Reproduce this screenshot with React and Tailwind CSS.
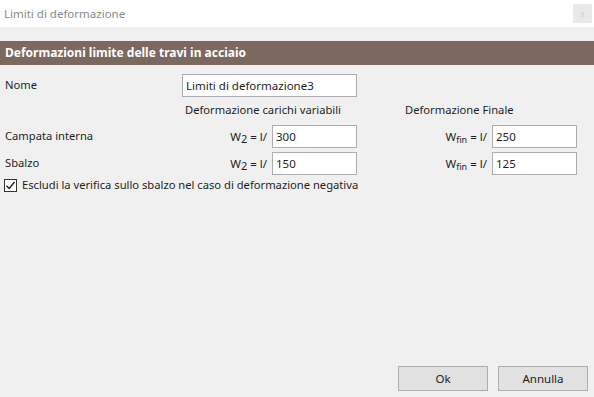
import React, { useState } from "react";

const font = { fontFamily: '"Segoe UI", "Noto Sans", "Liberation Sans", sans-serif' };

const Field = ({ value, width = "w-[85px]" }) => (
  <input
    type="text"
    defaultValue={value}
    className={`${width} h-[23px] border border-[#abadb3] bg-white px-[3px] text-[11.5px] text-[#1e1e1e] outline-none`}
  />
);

const Formula = ({ sub, smallSub }) => (
  <span className="text-[11.5px] text-[#1e1e1e] whitespace-nowrap">
    W
    <span className={smallSub ? "text-[9px] relative top-[2px]" : "text-[11px] relative top-[2px]"}>{sub}</span> = l/
  </span>
);

const App = () => {
  const [escludi, setEscludi] = useState(true);

  const rows = [
    { label: "Campata interna", a: "300", b: "250" },
    { label: "Sbalzo", a: "150", b: "125" },
  ];

  return (
    <div style={font} className="w-[594px] h-[397px] bg-[#f0f0f0] flex flex-col text-[11.2px] text-[#1e1e1e] overflow-hidden">
      <div className="h-[27px] bg-white flex items-center justify-between pl-[4px] pr-[2px]">
        <span className="text-[11.5px] text-[#8a8a8a]">Limiti di deformazione</span>
        <div className="w-[19px] h-[19px] bg-[#e9e9e9] flex items-center justify-center text-[8px] text-[#d0d0d0]">x</div>
      </div>

      <div className="mt-[14px] h-[24px] bg-[#7b685f] flex items-center px-[5px]">
        <span className="text-white font-bold text-[12px]">Deformazioni limite delle travi in acciaio</span>
      </div>

      <div className="flex flex-col pt-[9px]">
        <div className="flex items-center h-[23px]">
          <div className="w-[182px] pl-[5px]">Nome</div>
          <Field value="Limiti di deformazione3" width="w-[175px]" />
        </div>

        <div className="flex items-center h-[26px]">
          <div className="w-[185px]" />
          <div className="w-[220px]">Deformazione carichi variabili</div>
          <div>Deformazione Finale</div>
        </div>

        <div className="flex flex-col gap-[4px] mt-[2px]">
          {rows.map((r) => (
            <div key={r.label} className="flex items-center h-[23px]">
              <div className="w-[182px] pl-[5px]">{r.label}</div>
              <div className="w-[175px] flex items-center justify-end gap-[5px]">
                <Formula sub="2" />
                <Field value={r.a} />
              </div>
              <div className="w-[220px] flex items-center justify-end gap-[5px]">
                <Formula sub="fin" smallSub />
                <Field value={r.b} />
              </div>
            </div>
          ))}
        </div>

        <label className="flex items-center gap-[5px] pl-[4px] mt-[2px] h-[16px] cursor-pointer">
          <span
            onClick={() => setEscludi(!escludi)}
            className="w-[13px] h-[13px] border border-[#333333] bg-white flex items-center justify-center"
          >
            {escludi && (
              <svg width="11" height="11" viewBox="0 0 11 11">
                <path d="M1.5 5.8 L4.2 8.5 L9.5 2" fill="none" stroke="#1e1e1e" strokeWidth="1.4" />
              </svg>
            )}
          </span>
          <span>Escludi la verifica sullo sbalzo nel caso di deformazione negativa</span>
        </label>
      </div>

      <div className="flex-1" />

      <div className="flex justify-end gap-[10px] pr-[6px] pb-[6px]">
        <button className="w-[90px] h-[25px] bg-[#e1e1e1] border border-[#adadad] text-[11.5px] text-[#1e1e1e]">Ok</button>
        <button className="w-[90px] h-[25px] bg-[#e1e1e1] border border-[#adadad] text-[11.5px] text-[#1e1e1e]">Annulla</button>
      </div>
    </div>
  );
};

export default App;
